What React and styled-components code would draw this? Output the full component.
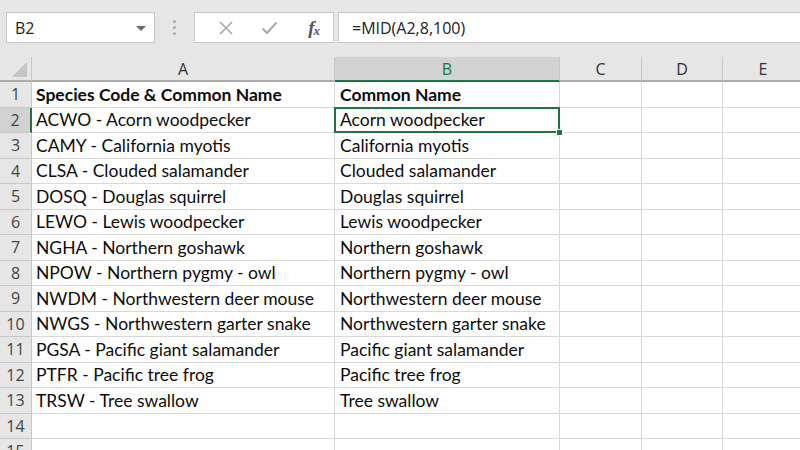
import React from 'react';
import styled, { createGlobalStyle } from 'styled-components';

const GlobalStyle = createGlobalStyle`
  html, body {
    margin: 0;
    padding: 0;
    background: #e6e6e6;
  }
`;

const rows = [
  ['Species Code & Common Name', 'Common Name'],
  ['ACWO - Acorn woodpecker', 'Acorn woodpecker'],
  ['CAMY - California myotis', 'California myotis'],
  ['CLSA - Clouded salamander', 'Clouded salamander'],
  ['DOSQ - Douglas squirrel', 'Douglas squirrel'],
  ['LEWO - Lewis woodpecker', 'Lewis woodpecker'],
  ['NGHA - Northern goshawk', 'Northern goshawk'],
  ['NPOW - Northern pygmy - owl', 'Northern pygmy - owl'],
  ['NWDM - Northwestern deer mouse', 'Northwestern deer mouse'],
  ['NWGS - Northwestern garter snake', 'Northwestern garter snake'],
  ['PGSA - Pacific giant salamander', 'Pacific giant salamander'],
  ['PTFR - Pacific tree frog', 'Pacific tree frog'],
  ['TRSW - Tree swallow', 'Tree swallow'],
  ['', ''],
  ['', ''],
];

const columns = [
  { name: 'A', width: 303 },
  { name: 'B', width: 225 },
  { name: 'C', width: 82 },
  { name: 'D', width: 81 },
  { name: 'E', width: 81 },
];

const Window = styled.div`
  width: 800px;
  height: 450px;
  overflow: hidden;
  background: #e6e6e6;
  font-family: "Segoe UI", "Open Sans", "Noto Sans", sans-serif;
`;

const Toolbar = styled.div`
  display: flex;
  align-items: center;
  height: 57px;
  padding: 0 0 2px 6px;
  box-sizing: border-box;
`;

const Box = styled.div`
  height: 31px;
  box-sizing: border-box;
  background: #fff;
  border: 1px solid #c6c6c6;
  display: flex;
  align-items: center;
`;

const NameBox = styled(Box)`
  width: 149px;
  padding: 0 8px 0 8px;
  justify-content: space-between;
  font-size: 16px;
  color: #222;
`;

const Caret = styled.span`
  width: 0;
  height: 0;
  border-left: 5px solid transparent;
  border-right: 5px solid transparent;
  border-top: 5px solid #6a6a6a;
  margin-top: 1px;
`;

const Dots = styled.div`
  width: 39px;
  display: flex;
  flex-direction: column;
  align-items: center;
  gap: 3px;
  span {
    width: 3px;
    height: 3px;
    border-radius: 50%;
    background: #a8a8a8;
  }
`;

const ButtonsBox = styled(Box)`
  width: 140px;
  padding: 0 0 0 10px;
`;

const IconSlot = styled.div`
  width: 46px;
  display: flex;
  justify-content: center;
  align-items: center;
`;

const Fx = styled.span`
  font-family: "Liberation Serif", serif;
  font-style: italic;
  font-weight: bold;
  font-size: 19px;
  color: #555;
  letter-spacing: -1px;
  margin-left: 4px;
  sub {
    font-size: 13px;
    vertical-align: -1px;
  }
`;

const FormulaBox = styled(Box)`
  flex: 1;
  margin-left: 4px;
  border-right: none;
  padding-left: 13px;
  font-size: 16px;
  color: #222;
`;

const Grid = styled.div`
  display: grid;
  grid-template-columns: 32px ${columns.map((c) => c.width + 'px').join(' ')};
  grid-template-rows: 25px repeat(${rows.length}, 25.5px);
  background: #fff;
`;

const Corner = styled.div`
  background: #e6e6e6;
  border-bottom: 2px solid #ababab;
  border-right: 1px solid #c8c8c8;
  box-sizing: border-box;
  position: relative;
  &::after {
    content: '';
    position: absolute;
    right: 4px;
    bottom: 3px;
    width: 0;
    height: 0;
    border-left: 15px solid transparent;
    border-bottom: 15px solid #c4c4c4;
  }
`;

const ColHead = styled.div`
  box-sizing: border-box;
  display: flex;
  align-items: center;
  justify-content: center;
  font-size: 16px;
  background: ${(p) => (p.$active ? '#d2d2d2' : '#e6e6e6')};
  color: ${(p) => (p.$active ? '#217346' : '#333')};
  border-bottom: 2px solid ${(p) => (p.$active ? '#217346' : '#ababab')};
  border-right: 1px solid #c8c8c8;
  padding-top: 1px;
`;

const RowHead = styled.div`
  box-sizing: border-box;
  display: flex;
  align-items: center;
  justify-content: center;
  font-size: 16px;
  color: #444;
  background: ${(p) => (p.$active ? '#d2d2d2' : '#e6e6e6')};
  border-bottom: 1px solid #c8c8c8;
  border-right: ${(p) => (p.$active ? '2px solid #217346' : '1px solid #c8c8c8')};
`;

const Cell = styled.div`
  box-sizing: border-box;
  display: flex;
  align-items: center;
  padding-left: ${(p) => (p.$indent ? 5 : 4)}px;
  border-right: 1px solid #d9d9d9;
  border-bottom: 1px solid #d9d9d9;
  font-family: "Lato", "Open Sans", sans-serif;
  font-size: 17.5px;
  font-weight: ${(p) => (p.$bold ? 700 : 400)};
  color: #0d0d0d;
  white-space: nowrap;
  position: relative;
  ${(p) =>
    p.$selected &&
    `
    &::after {
      content: '';
      position: absolute;
      left: -1px;
      top: -1px;
      right: -1px;
      bottom: -1px;
      border: 2px solid #217346;
    }
    &::before {
      content: '';
      position: absolute;
      right: -4px;
      bottom: -4px;
      width: 5px;
      height: 5px;
      background: #217346;
      border: 1px solid #fff;
      z-index: 2;
    }
  `}
`;

function CrossIcon() {
  return (
    <svg width="14" height="14" viewBox="0 0 14 14">
      <path d="M1 1 L13 13 M13 1 L1 13" stroke="#a6a6a6" strokeWidth="1.6" fill="none" />
    </svg>
  );
}

function CheckIcon() {
  return (
    <svg width="17" height="14" viewBox="0 0 17 14">
      <path d="M1.5 7.5 L6 12 L15.5 1.5" stroke="#a6a6a6" strokeWidth="2" fill="none" />
    </svg>
  );
}

export default function App() {
  return (
    <Window>
      <GlobalStyle />
      <Toolbar>
        <NameBox>
          <span>B2</span>
          <Caret />
        </NameBox>
        <Dots>
          <span />
          <span />
          <span />
        </Dots>
        <ButtonsBox>
          <IconSlot><CrossIcon /></IconSlot>
          <IconSlot><CheckIcon /></IconSlot>
          <IconSlot><Fx>f<sub>x</sub></Fx></IconSlot>
        </ButtonsBox>
        <FormulaBox>=MID(A2,8,100)</FormulaBox>
      </Toolbar>
      <Grid>
        <Corner />
        {columns.map((c) => (
          <ColHead key={c.name} $active={c.name === 'B'}>{c.name}</ColHead>
        ))}
        {rows.map((r, i) => (
          <React.Fragment key={i}>
            <RowHead $active={i === 1}>{i + 1}</RowHead>
            <Cell $bold={i === 0}>{r[0]}</Cell>
            <Cell $bold={i === 0} $selected={i === 1} $indent>{r[1]}</Cell>
            <Cell />
            <Cell />
            <Cell />
          </React.Fragment>
        ))}
      </Grid>
    </Window>
  );
}
